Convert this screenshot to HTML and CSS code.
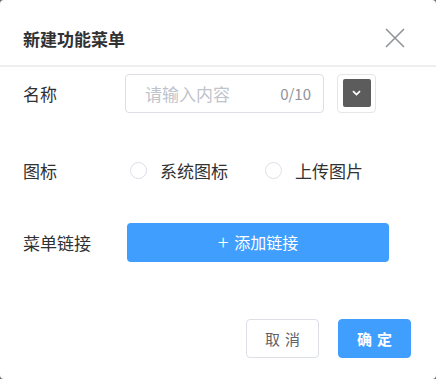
FILE: index.html
```html
<!DOCTYPE html>
<html lang="zh-CN">
<head>
    <meta charset="UTF-8">
    <meta name="viewport" content="width=device-width, initial-scale=1.0">
    <title>新建功能菜单</title>
    <link rel="stylesheet" href="styles.css">
</head>
<body>
<div class="dialog">
    <div class="dialog-header">
        <span class="dialog-title">新建功能菜单</span>
        <svg class="close" width="20" height="20" viewBox="0 0 20 20">
            <path d="M1 1 L19 19 M19 1 L1 19" stroke="#909399" stroke-width="1.6" fill="none"/>
        </svg>
    </div>
    <div class="dialog-body">
        <div class="form-row row-name">
            <label class="form-label">名称</label>
            <div class="input-box">
                <span class="placeholder">请输入内容</span>
                <span class="counter">0/10</span>
            </div>
            <div class="icon-picker">
                <span class="icon-swatch">
                    <svg width="9" height="6" viewBox="0 0 9 6">
                        <path d="M1 1.2 L4.5 4.6 L8 1.2" stroke="#fff" stroke-width="1.8" fill="none"/>
                    </svg>
                </span>
            </div>
        </div>
        <div class="form-row row-icon">
            <label class="form-label">图标</label>
            <div class="radio-group">
                <span class="radio"><span class="radio-dot"></span>系统图标</span>
                <span class="radio"><span class="radio-dot"></span>上传图片</span>
            </div>
        </div>
        <div class="form-row row-link">
            <label class="form-label">菜单链接</label>
            <button class="btn-add"><span class="plus">+</span>添加链接</button>
        </div>
    </div>
    <div class="dialog-footer">
        <button class="btn btn-cancel">取消</button>
        <button class="btn btn-primary">确定</button>
    </div>
</div>
</body>
</html>
```

FILE: styles.css
```css
html, body {
    margin: 0;
    padding: 0;
    background: #6b6b6b;
}
body {
    font-family: "Noto Sans CJK SC", "Noto Sans", sans-serif;
    color: #303133;
}
.dialog {
    width: 436px;
    height: 379px;
    background: #fff;
    border-radius: 4px;
    overflow: hidden;
}
.dialog-header {
    height: 65px;
    padding: 0 31px 0 23px;
    display: flex;
    align-items: center;
    justify-content: space-between;
    border-bottom: 2px solid #eeeeee;
}
.dialog-title {
    font-size: 17px;
    font-weight: bold;
    color: #303133;
    margin-top: 11px;
}
.close {
    margin-top: 11px;
}
.dialog-body {
    padding: 6px 0 0 23px;
}
.form-row {
    display: flex;
    align-items: center;
    height: 40px;
}
.form-label {
    width: 102px;
    font-size: 17px;
    color: #303133;
}
.row-icon {
    margin-top: 37px;
}
.row-link {
    margin-top: 32px;
}
.input-box {
    width: 199px;
    height: 39px;
    border: 1px solid #dcdfe6;
    border-radius: 4px;
    display: flex;
    align-items: center;
    justify-content: space-between;
    padding: 0 12px 0 19px;
    box-sizing: border-box;
}
.placeholder {
    font-size: 17px;
    color: #c0c4cc;
}
.counter {
    font-size: 15px;
    color: #909399;
}
.icon-picker {
    margin-left: 13px;
    width: 39px;
    height: 39px;
    box-sizing: border-box;
    border: 1px solid #e6e6e6;
    border-radius: 4px;
    display: flex;
    align-items: center;
    justify-content: center;
}
.icon-swatch {
    width: 28px;
    height: 28px;
    background: #5c5c5c;
    border-radius: 2px;
    display: flex;
    align-items: center;
    justify-content: center;
}
.radio-group {
    display: flex;
    align-items: center;
    margin-left: 5px;
}
.radio {
    display: flex;
    align-items: center;
    font-size: 17px;
    color: #303133;
    margin-right: 37px;
}
.radio-dot {
    width: 15px;
    height: 15px;
    border: 1px solid #dcdfe6;
    border-radius: 50%;
    margin-right: 13px;
}
.btn-add {
    width: 262px;
    height: 39px;
    margin-left: 2px;
    border: none;
    border-radius: 4px;
    background: #409eff;
    color: #fff;
    font-family: inherit;
    font-size: 16px;
    display: flex;
    align-items: center;
    justify-content: center;
}
.plus {
    font-size: 20px;
    font-weight: 300;
    margin-right: 6px;
    line-height: 1;
}
.dialog-footer {
    display: flex;
    justify-content: flex-end;
    gap: 19px;
    padding: 57px 25px 0 0;
}
.btn {
    width: 73px;
    height: 39px;
    border-radius: 4px;
    font-family: inherit;
    font-size: 15px;
    letter-spacing: 5px;
    text-indent: 5px;
    box-sizing: border-box;
}
.btn-cancel {
    background: #fff;
    border: 1px solid #dcdfe6;
    color: #606266;
}
.btn-primary {
    background: #409eff;
    border: 1px solid #409eff;
    color: #fff;
    font-weight: bold;
}
```
